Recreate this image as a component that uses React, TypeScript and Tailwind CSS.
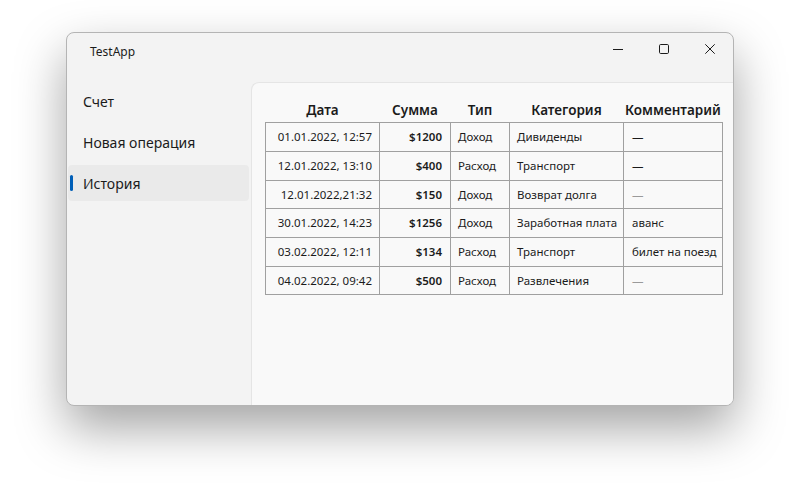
import React from "react";

const rows = [
  { date: "01.01.2022, 12:57", sum: "$1200", type: "Доход", cat: "Дивиденды", com: "—", light: false },
  { date: "12.01.2022, 13:10", sum: "$400", type: "Расход", cat: "Транспорт", com: "—", light: false },
  { date: "12.01.2022,21:32", sum: "$150", type: "Доход", cat: "Возврат долга", com: "—", light: true },
  { date: "30.01.2022, 14:23", sum: "$1256", type: "Доход", cat: "Заработная плата", com: "аванс", light: false },
  { date: "03.02.2022, 12:11", sum: "$134", type: "Расход", cat: "Транспорт", com: "билет на поезд", light: false },
  { date: "04.02.2022, 09:42", sum: "$500", type: "Расход", cat: "Развлечения", com: "—", light: true },
];

const heights = [29, 29, 28, 29, 29, 28];

export default function App() {
  return (
    <div
      className="w-[800px] h-[504px] bg-white pl-[66px] pt-[32px]"
      style={{ fontFamily: '"Noto Sans", "Open Sans", sans-serif' }}
    >
      <div className="w-[668px] h-[374px] bg-[#f3f3f3] rounded-[8px] border border-[#b4b4b4] shadow-[0_22px_50px_rgba(0,0,0,0.36)] flex flex-col overflow-hidden text-[#1b1b1b]">
        {/* title bar */}
        <div className="h-[49px] flex items-start shrink-0">
          <div className="pl-[23px] pt-[10px] text-[12px] leading-[18px]">TestApp</div>
          <div className="ml-auto flex">
            <div className="w-[46px] h-[32px] flex items-center justify-center">
              <svg width="10" height="10" viewBox="0 0 10 10">
                <path d="M0 5.5H10" stroke="#1b1b1b" strokeWidth="1" />
              </svg>
            </div>
            <div className="w-[46px] h-[32px] flex items-center justify-center">
              <svg width="10" height="10" viewBox="0 0 10 10">
                <rect x="0.5" y="0.5" width="9" height="9" rx="1.2" fill="none" stroke="#1b1b1b" strokeWidth="1" />
              </svg>
            </div>
            <div className="w-[46px] h-[32px] flex items-center justify-center">
              <svg width="10" height="10" viewBox="0 0 10 10">
                <path d="M0.3 0.3L9.7 9.7M9.7 0.3L0.3 9.7" stroke="#1b1b1b" strokeWidth="1" />
              </svg>
            </div>
          </div>
        </div>
        <div className="flex flex-1 min-h-0">
          {/* nav */}
          <div className="w-[184px] shrink-0 pl-[1px] pt-[1px] flex flex-col gap-[5px]">
            {["Счет", "Новая операция", "История"].map((t, i) => (
              <div
                key={t}
                className={
                  "relative h-[36px] w-[181px] rounded-[4px] flex items-center pl-[15px] text-[14px] " +
                  (i === 2 ? "bg-[#eaeaea]" : "")
                }
              >
                {i === 2 && (
                  <div className="absolute left-[2px] top-[10px] w-[3px] h-[16px] rounded-full bg-[#005fb8]" />
                )}
                {t}
              </div>
            ))}
          </div>
          {/* content */}
          <div className="flex-1 bg-[#f9f9f9] border-l border-t border-[#e5e5e5] rounded-tl-[8px] pl-[13px] pt-[16px]">
            <table className="border-collapse text-[11.5px] table-fixed">
              <thead>
                <tr className="h-[23px] text-[13.5px]">
                  <th className="w-[114px] font-semibold text-center align-top leading-[20px] pt-[1px]">Дата</th>
                  <th className="w-[71px] font-semibold text-center align-top leading-[20px] pt-[1px]">Сумма</th>
                  <th className="w-[59px] font-semibold text-center align-top leading-[20px] pt-[1px]">Тип</th>
                  <th className="w-[114px] font-semibold text-center align-top leading-[20px] pt-[1px]">Категория</th>
                  <th className="w-[99px] font-semibold text-center align-top leading-[20px] pt-[1px] whitespace-nowrap">Комментарий</th>
                </tr>
              </thead>
              <tbody>
                {rows.map((r, i) => (
                  <tr key={i} style={{ height: heights[i] }}>
                    <td className="border border-[#a0a0a0] text-right pr-[7px] pt-[1px] whitespace-nowrap">{r.date}</td>
                    <td className="border border-[#a0a0a0] text-right pr-[8px] pt-[1px] font-semibold">{r.sum}</td>
                    <td className="border border-[#a0a0a0] pl-[7px] pt-[1px]">{r.type}</td>
                    <td className="border border-[#a0a0a0] pl-[7px] pt-[1px] whitespace-nowrap">{r.cat}</td>
                    <td
                      className={
                        "border border-[#a0a0a0] pl-[8px] pt-[1px] whitespace-nowrap " +
                        (r.light ? "text-[#9a9a9a]" : "")
                      }
                    >
                      {r.com}
                    </td>
                  </tr>
                ))}
              </tbody>
            </table>
          </div>
        </div>
      </div>
    </div>
  );
}
